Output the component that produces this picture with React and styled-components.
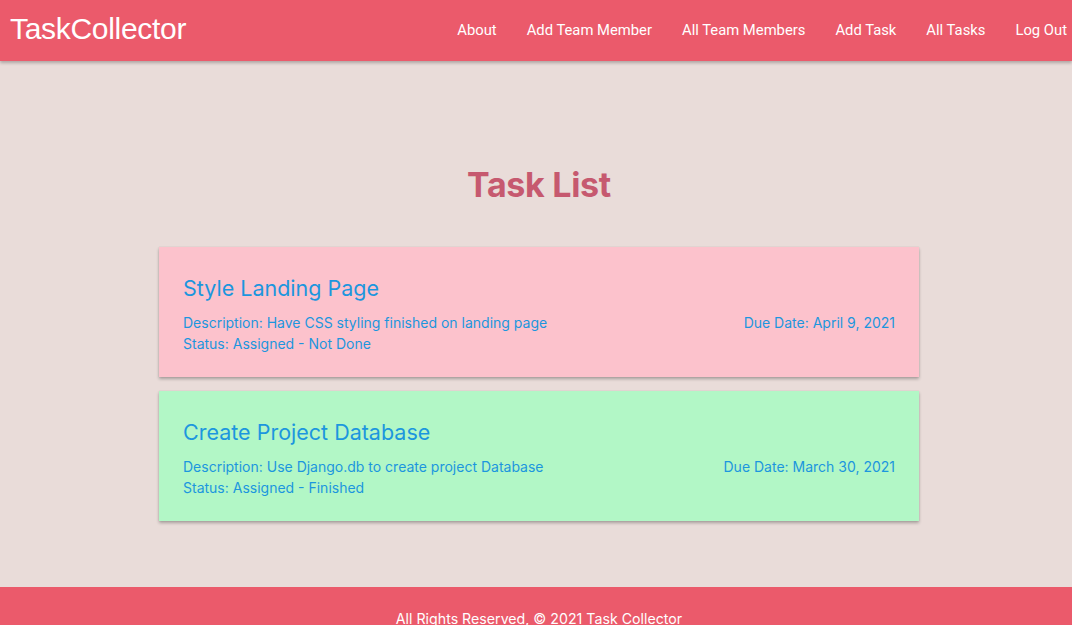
import React from 'react'
import styled, { createGlobalStyle } from 'styled-components'

const GlobalStyle = createGlobalStyle`
    html, body {
        margin: 0;
        padding: 0;
        background-color: #e9dcd9;
        font-family: Inter, "Noto Sans", sans-serif;
    }
`

const Page = styled.div`
    min-height: 625px;
    display: flex;
    flex-direction: column;
`
const Nav = styled.nav`
    height: 61px;
    background-color: #eb5a6b;
    display: flex;
    align-items: center;
    justify-content: space-between;
    padding: 0 5px 0 10px;
    box-shadow: 0 2px 3px rgba(0,0,0,0.25);
    position: relative;
    z-index: 1;
`
const Logo = styled.div`
    font-family: "Liberation Sans", Arial, sans-serif;
    font-size: 30px;
    color: #fff;
    letter-spacing: -0.3px;
    margin-top: -4px;
`
const Menu = styled.ul`
    display: flex;
    list-style: none;
    margin: -2px 0 0;
    padding: 0;
`
const MenuItem = styled.li`
    font-family: Roboto, sans-serif;
    font-size: 14.8px;
    color: #fff;
    padding: 0 15px;
    cursor: pointer;
    &:last-child {
        padding-right: 0;
    }
`
const Main = styled.main`
    flex: 1;
    padding: 102px 0 66px 6px;
`
const Heading = styled.h1`
    margin: 0 0 41px;
    text-align: center;
    font-size: 34px;
    line-height: 43px;
    font-weight: 700;
    color: #c6596f;
    letter-spacing: -0.3px;
`
const List = styled.div`
    width: 760px;
    margin: 0 auto;
    display: flex;
    flex-direction: column;
    gap: 14px;
`
const Card = styled.div`
    background-color: ${p => p.done ? '#b2f7c6' : '#fcc2cc'};
    padding: 25px 24px 24px;
    height: 130px;
    box-sizing: border-box;
    box-shadow: 0 2px 3px rgba(0,0,0,0.28), 0 0 1px rgba(0,0,0,0.12);
    color: #1c96de;
`
const Title = styled.h2`
    margin: 0 0 8px;
    font-size: 21.5px;
    line-height: 32px;
    font-weight: 400;
`
const Row = styled.div`
    display: flex;
    justify-content: space-between;
    font-size: 14px;
    line-height: 21px;
`

const tasks = [
    { title: 'Style Landing Page', desc: 'Have CSS styling finished on landing page', status: 'Assigned - Not Done', due: 'April 9, 2021', done: false },
    { title: 'Create Project Database', desc: 'Use Django.db to create project Database', status: 'Assigned - Finished', due: 'March 30, 2021', done: true },
]

const Footer = styled.footer`
    background-color: #eb5a6b;
    color: #fff;
    text-align: center;
    font-size: 14.2px;
    line-height: 21px;
    padding: 21px 0 10px 6px;
`

const App = () => {
  return (
    <Page>
        <GlobalStyle />
        <Nav>
            <Logo>TaskCollector</Logo>
            <Menu>
                <MenuItem>About</MenuItem>
                <MenuItem>Add Team Member</MenuItem>
                <MenuItem>All Team Members</MenuItem>
                <MenuItem>Add Task</MenuItem>
                <MenuItem>All Tasks</MenuItem>
                <MenuItem>Log Out</MenuItem>
            </Menu>
        </Nav>
        <Main>
            <Heading>Task List</Heading>
            <List>
                {tasks.map(t => (
                    <Card key={t.title} done={t.done}>
                        <Title>{t.title}</Title>
                        <Row>
                            <span>Description: {t.desc}</span>
                            <span>Due Date: {t.due}</span>
                        </Row>
                        <Row>
                            <span>Status: {t.status}</span>
                        </Row>
                    </Card>
                ))}
            </List>
        </Main>
        <Footer>All Rights Reserved, © 2021 Task Collector</Footer>
    </Page>
  )
}

export default App
